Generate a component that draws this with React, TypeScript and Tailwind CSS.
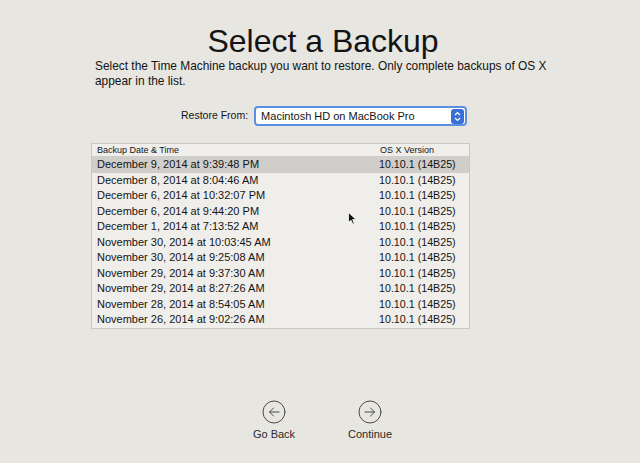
import React from 'react'

const backups = [
  'December 9, 2014 at 9:39:48 PM',
  'December 8, 2014 at 8:04:46 AM',
  'December 6, 2014 at 10:32:07 PM',
  'December 6, 2014 at 9:44:20 PM',
  'December 1, 2014 at 7:13:52 AM',
  'November 30, 2014 at 10:03:45 AM',
  'November 30, 2014 at 9:25:08 AM',
  'November 29, 2014 at 9:37:30 AM',
  'November 29, 2014 at 8:27:26 AM',
  'November 28, 2014 at 8:54:05 AM',
  'November 26, 2014 at 9:02:26 AM',
]

function CircleArrow({ dir }: { dir: 'left' | 'right' }) {
  return (
    <svg width="24" height="24" viewBox="0 0 24 24" fill="none" stroke="#4a4a4a" strokeWidth="1" strokeLinecap="round" strokeLinejoin="round">
      <circle cx="12" cy="12" r="11" />
      {dir === 'left' ? (
        <path d="M17 12H7.5 M11.5 8L7.5 12L11.5 16" />
      ) : (
        <path d="M7 12H16.5 M12.5 8L16.5 12L12.5 16" />
      )}
    </svg>
  )
}

export default function App() {
  return (
    <div className="relative w-[640px] h-[463px] overflow-hidden bg-[#e7e6e1] font-['Liberation_Sans',Arial,sans-serif] text-[#141414]">
      {/* タイトル */}
      <div className="pt-[23px] pl-[6px] text-center text-[32px] leading-[36px]">Select a Backup</div>

      <p className="ml-[95px] w-[470px] text-[11.9px] leading-[15px]">
        Select the Time Machine backup you want to restore. Only complete backups of OS X appear in the list.
      </p>

      {/* 復元元 */}
      <div className="mt-[17px] ml-[181px] flex items-center gap-[6px]">
        <span className="text-[10.5px]">Restore From:</span>
        <div className="flex h-[20px] w-[213px] items-center rounded-[4px] border-2 border-[#5b8fe0] bg-white pl-[5px] pr-[1px]">
          <span className="flex-1 text-[11px]">Macintosh HD on MacBook Pro</span>
          <div className="flex h-[15px] w-[13px] flex-col items-center justify-center rounded-[3px] bg-[#3a6fd8]">
            <svg width="7" height="11" viewBox="0 0 7 11" fill="none" stroke="white" strokeWidth="1.2">
              <path d="M1 4L3.5 1.5L6 4 M1 7L3.5 9.5L6 7" />
            </svg>
          </div>
        </div>
      </div>

      {/* バックアップ一覧 */}
      <div className="mt-[17px] ml-[91px] w-[379px] border border-[#c9c8c4] bg-[#efeeea]">
        <div className="grid h-[13px] grid-cols-[283px_1fr] items-center border-b border-[#cfceca] pl-[5px] text-[9px] leading-[13px]">
          <span>Backup Date &amp; Time</span>
          <span>OS X Version</span>
        </div>
        {backups.map((b, i) => (
          <div
            key={b}
            className={
              'grid h-[15.5px] grid-cols-[282px_1fr] items-center pl-[5px] text-[11px] leading-[15px] ' +
              (i === 0 ? 'bg-[#cfceca]' : '')
            }
          >
            <span>{b}</span>
            <span className="text-[10.7px]">10.10.1 (14B25)</span>
          </div>
        ))}
      </div>

      {/* ナビゲーション */}
      <div className="mt-[71px] ml-[244px] flex gap-[36px]">
        <div className="flex w-[60px] flex-col items-center gap-[2px]">
          <CircleArrow dir="left" />
          <span className="text-[11px] text-[#2a2a2a]">Go Back</span>
        </div>
        <div className="flex w-[60px] flex-col items-center gap-[2px]">
          <CircleArrow dir="right" />
          <span className="text-[11px] text-[#2a2a2a]">Continue</span>
        </div>
      </div>

      {/* マウスカーソル */}
      <svg className="absolute left-[348px] top-[212px]" width="9" height="13" viewBox="0 0 9 13">
        <path d="M0.5 0.5L0.5 10.5L3 8.2L4.8 12.2L6.3 11.5L4.6 7.6L8 7.6Z" fill="#111" stroke="#fff" strokeWidth="0.8" />
      </svg>
    </div>
  )
}
